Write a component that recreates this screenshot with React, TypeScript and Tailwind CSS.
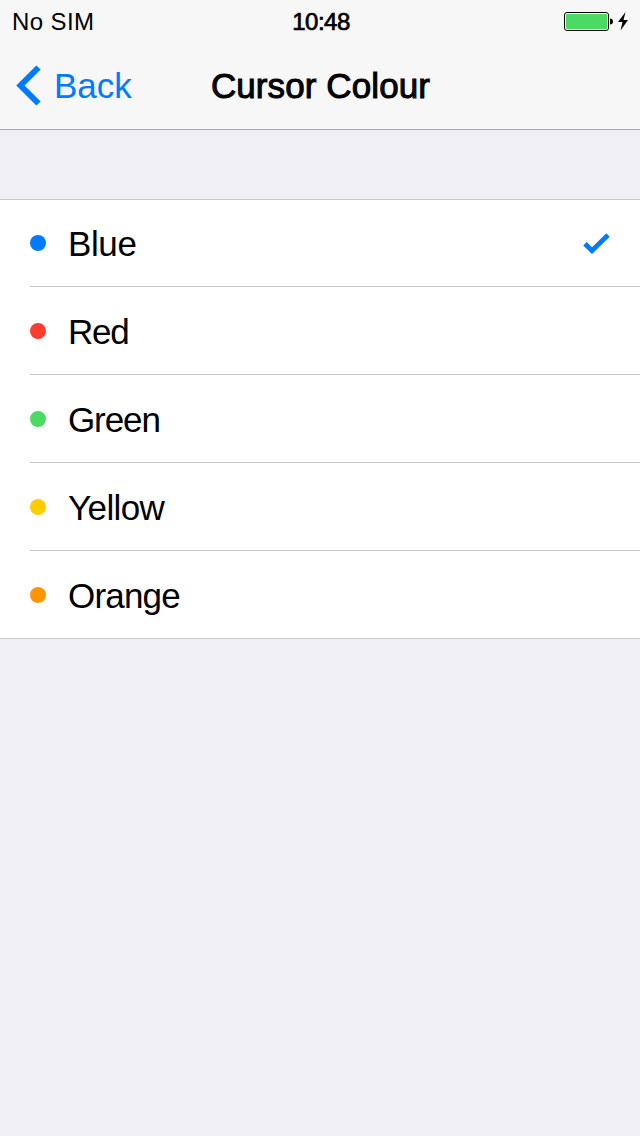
import { useState } from "react";

const colours = [
  { name: "Blue", dot: "bg-[#007aff]", tracking: "tracking-[-0.4px]" },
  { name: "Red", dot: "bg-[#ff3b30]", tracking: "tracking-[-1.3px]" },
  { name: "Green", dot: "bg-[#4cd964]", tracking: "tracking-[-1.1px]" },
  { name: "Yellow", dot: "bg-[#ffcc00]", tracking: "tracking-[-0.6px]" },
  { name: "Orange", dot: "bg-[#ff9500]", tracking: "tracking-[-0.8px]" },
];

function StatusBar() {
  return (
    <div className="grid h-10 grid-cols-3 items-center pr-3 pl-3 text-[24px] leading-10">
      <span className="pt-0.5 tracking-[0.4px]">No SIM</span>
      <span className="pt-0.5 pl-0.5 text-center tracking-[-0.5px] [-webkit-text-stroke:0.7px_black]">
        10:48
      </span>
      <svg className="mt-0.5 justify-self-end" width="64" height="20" viewBox="0 0 64 20">
        <rect x="0.5" y="0.5" width="44" height="18" rx="2.5" fill="#fff" stroke="#000" />
        <rect x="2" y="2" width="41" height="15" rx="1" fill="#4cd964" />
        <path d="M46 6.5c1.8 0 3 1.2 3 3s-1.2 3-3 3z" fill="#000" />
        <path d="M61.5 0 54 10h4.5L56.5 18.5 64 8h-4.5z" fill="#000" />
      </svg>
    </div>
  );
}

function NavBar() {
  return (
    <div className="grid h-[89px] grid-cols-[200px_240px_200px] items-center text-[35px] leading-[86px]">
      <button className="flex items-center pl-4 text-[#007aff]">
        <svg className="overflow-visible" width="26" height="41" viewBox="0 0 26 41" fill="none">
          <path d="M22.5 3.5l-18 18 18 18" stroke="currentColor" strokeWidth="6" />
        </svg>
        <span className="ml-3 pt-[3px] tracking-[0px]">Back</span>
      </button>
      <h1 className="pt-[3px] pl-px text-center tracking-[0.1px] whitespace-nowrap [-webkit-text-stroke:1px_black]">
        Cursor Colour
      </h1>
    </div>
  );
}

function App() {
  const [selected, setSelected] = useState("Blue");

  return (
    <div className="min-h-screen w-[640px] bg-[#efeff4] font-['Liberation_Sans',Arial,sans-serif] text-black">
      <header className="h-[130px] border-b border-[#a7a7aa] bg-[#f7f7f7]">
        <StatusBar />
        <NavBar />
      </header>

      <ul className="mt-[69px] border-b border-[#c8c7cc] bg-white bg-[linear-gradient(#c8c7cc,#c8c7cc)] bg-[length:100%_1px] bg-no-repeat">
        {colours.map((colour, i) => (
          <li key={colour.name} className="pl-[30px]">
            <button
              onClick={() => setSelected(colour.name)}
              className={`flex w-full items-center pt-px pr-[30px] text-left ${
                i < colours.length - 1 ? "h-[88px] border-b border-[#c8c7cc]" : "h-[87px]"
              }`}
            >
              <span className={`size-4 rounded-full ${colour.dot}`} />
              <span className={`ml-[22px] flex-1 pt-px text-[35px] leading-10 ${colour.tracking}`}>
                {colour.name}
              </span>
              {selected === colour.name && (
                <svg width="27" height="22" viewBox="0 0 27 22" fill="none">
                  <path d="M2 11.7l7 7L25 3" stroke="#007aff" strokeWidth="4.8" />
                </svg>
              )}
            </button>
          </li>
        ))}
      </ul>
    </div>
  );
}

export default App;
